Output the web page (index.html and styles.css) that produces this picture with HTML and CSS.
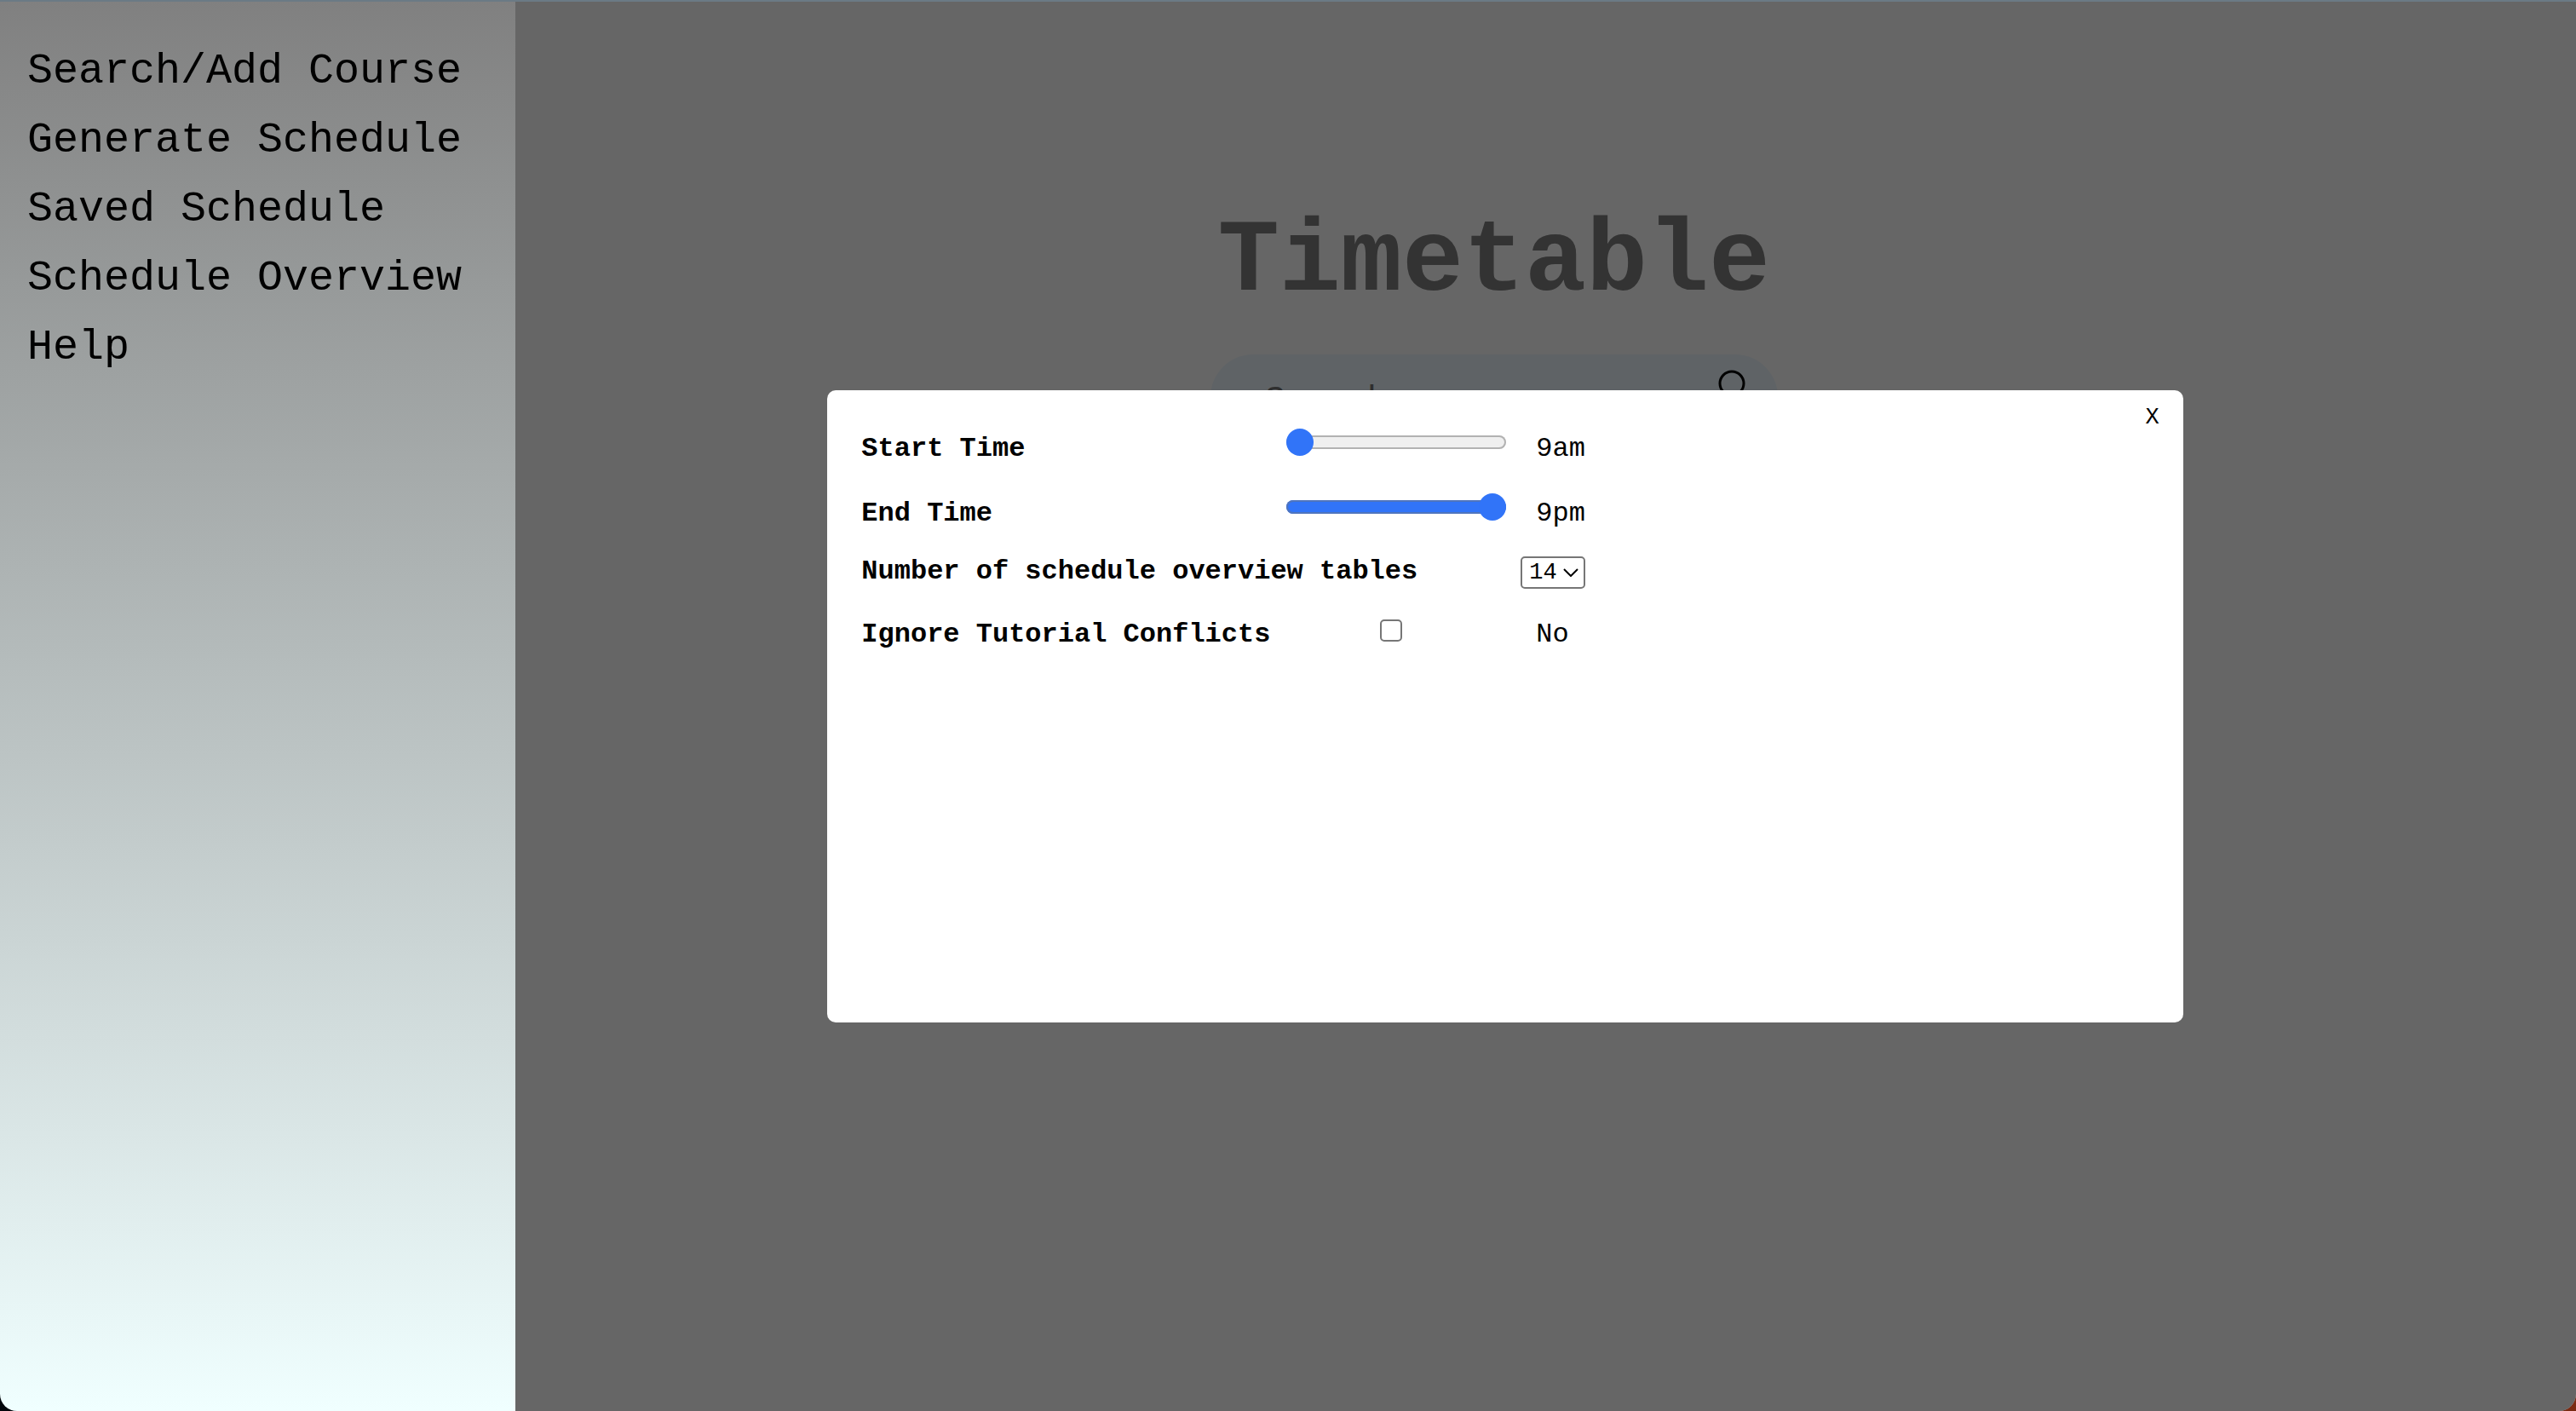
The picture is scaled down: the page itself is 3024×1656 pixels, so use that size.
FILE: index.html
```html
<!DOCTYPE html>
<html lang="en">
<head>
  <meta charset="utf-8">
  <title>Timetable</title>
  <link rel="stylesheet" href="styles.css">
</head>
<body>
  <div class="page">
    <nav class="sidebar">
      <a class="sidebar-link" href="#search">Search/Add Course</a>
      <a class="sidebar-link" href="#generate">Generate Schedule</a>
      <a class="sidebar-link" href="#saved">Saved Schedule</a>
      <a class="sidebar-link" href="#overview">Schedule Overview</a>
      <a class="sidebar-link" href="#help">Help</a>
    </nav>
    <main class="main">
      <h1 class="title">Timetable</h1>
      <form class="search">
        <input class="search-input" type="text" placeholder="Search" aria-label="Search">
        <button class="search-button" type="button" aria-label="Search">
          <svg class="search-icon" viewBox="0 0 40 64" fill="none" stroke="#000" stroke-width="3">
            <circle cx="20" cy="16" r="14"/>
            <path d="M29 27l10 14"/>
          </svg>
        </button>
      </form>
    </main>
  </div>

  <div class="overlay">
    <div class="modal" role="dialog" aria-label="Settings">
      <button class="close" type="button">X</button>
      <form class="settings">
        <label class="label slider-text" for="start">Start Time</label>
        <input class="slider slider-start" id="start" type="range" min="9" max="21" value="9">
        <output class="slider-text" for="start">9am</output>

        <label class="label slider-text" for="end">End Time</label>
        <input class="slider slider-end" id="end" type="range" min="9" max="21" value="21">
        <output class="slider-text" for="end">9pm</output>

        <label class="label row-text" for="tables">Number of schedule overview tables</label>
        <div class="select-box">
          <select class="select" id="tables">
            <option>14</option>
          </select>
          <svg class="select-arrow" viewBox="0 0 18 10" fill="none" stroke="#000" stroke-width="2">
            <path d="M1 1l8 8 8-8"/>
          </svg>
        </div>

        <label class="label row-text" for="ignore">Ignore Tutorial Conflicts</label>
        <input class="checkbox" id="ignore" type="checkbox">
        <output class="row-text" for="ignore">No</output>
      </form>
    </div>
  </div>
</body>
</html>
```

FILE: styles.css
```css
* {
  box-sizing: border-box;
}

html {
  background: linear-gradient(90deg, #06101c 50%, #7a2a12 50%);
}

body {
  margin: 0;
  font-family: "Courier New", "Liberation Mono", monospace;
  color: #000;
}

body::before {
  content: "";
  position: fixed;
  inset: 0 0 auto;
  z-index: 3;
  height: 2px;
  background: #6b7a85;
}

input,
select,
button {
  margin: 0;
  font-family: inherit;
}

.page {
  display: grid;
  grid-template-columns: 20% 1fr;
  min-height: 100vh;
}

/* Sidebar stays above the dimming layer */
.sidebar {
  position: relative;
  z-index: 2;
  display: flex;
  flex-direction: column;
  gap: 24px;
  padding: 55px 32px;
  border-radius: 0 0 0 20px;
  background: linear-gradient(#808080, #f0ffff);
}

.sidebar-link {
  font-size: 50px;
  line-height: 57px;
  color: #000;
  text-decoration: none;
}

.main {
  display: flex;
  flex-direction: column;
  align-items: center;
  padding: 240px 121px 0 0;
  border-radius: 0 0 20px 0;
  background: #fff;
}

.title {
  margin: 0 0 40px;
  font-size: 120px;
  line-height: 136px;
  color: #808080;
}

.search {
  display: flex;
  align-items: center;
  width: 666px;
  height: 100px;
  padding: 0 34px 0 64px;
  border-radius: 50px;
  background: #edf7ff;
}

.search-input {
  flex: 1;
  min-width: 0;
  border: 0;
  padding: 8px 0 0;
  background: none;
  font-size: 40px;
}

.search-input::placeholder {
  color: #757575;
}

.search-button {
  border: 0;
  padding: 0;
  background: none;
}

.search-icon {
  display: block;
  width: 40px;
  height: 64px;
}

.overlay {
  position: fixed;
  inset: 0;
  z-index: 1;
  display: grid;
  place-items: center;
  padding: 2px 0 0 510px;
  border-radius: 0 0 20px 0;
  background: rgba(0, 0, 0, 0.6);
}

.modal {
  display: flex;
  flex-direction: column;
  width: 63.3%;
  min-height: 742px;
  padding: 20px 28px 40px 40px;
  border-radius: 10px;
  background: #fff;
}

.close {
  align-self: flex-end;
  border: 0;
  padding: 0;
  background: none;
  font-size: 27px;
  line-height: 25px;
  color: #000;
}

.settings {
  display: grid;
  grid-template-columns: 499px 293px 58px;
  grid-template-rows: 76px 72px 74px 40px;
  align-items: start;
  font-size: 32px;
  line-height: 36px;
}

.label {
  font-weight: bold;
  white-space: nowrap;
}

.slider-text {
  padding-top: 6px;
}

.row-text {
  padding-top: 2px;
}

.slider {
  appearance: none;
  width: 258px;
  height: 32px;
  background: none;
}

.slider::-webkit-slider-runnable-track {
  height: 16px;
  border-radius: 8px;
  background: #efefef;
  box-shadow: inset 0 0 0 2px #b2b2b2;
}

.slider-end::-webkit-slider-runnable-track {
  background: #3174f8;
  box-shadow: inset 0 0 0 2px #4f74bd;
}

.slider::-webkit-slider-thumb {
  appearance: none;
  width: 32px;
  height: 32px;
  margin-top: -8px;
  border: 0;
  border-radius: 50%;
  background: #3174f8;
}

.select-box {
  display: grid;
  grid-column: 2 / 4;
  justify-self: end;
  align-items: center;
  width: 76px;
  padding-top: 2px;
}

.select {
  grid-area: 1 / 1;
  appearance: none;
  width: 100%;
  height: 38px;
  padding: 0 0 0 8px;
  border: 2px solid #767676;
  border-radius: 5px;
  background: #fff;
  font-size: 27px;
  color: #000;
}

.select-arrow {
  grid-area: 1 / 1;
  justify-self: end;
  width: 18px;
  height: 10px;
  margin-right: 8px;
  pointer-events: none;
}

.checkbox {
  appearance: none;
  width: 26px;
  height: 26px;
  margin: 2px 0 0 110px;
  border: 2px solid #767676;
  border-radius: 5px;
  background: #fff;
}
```
